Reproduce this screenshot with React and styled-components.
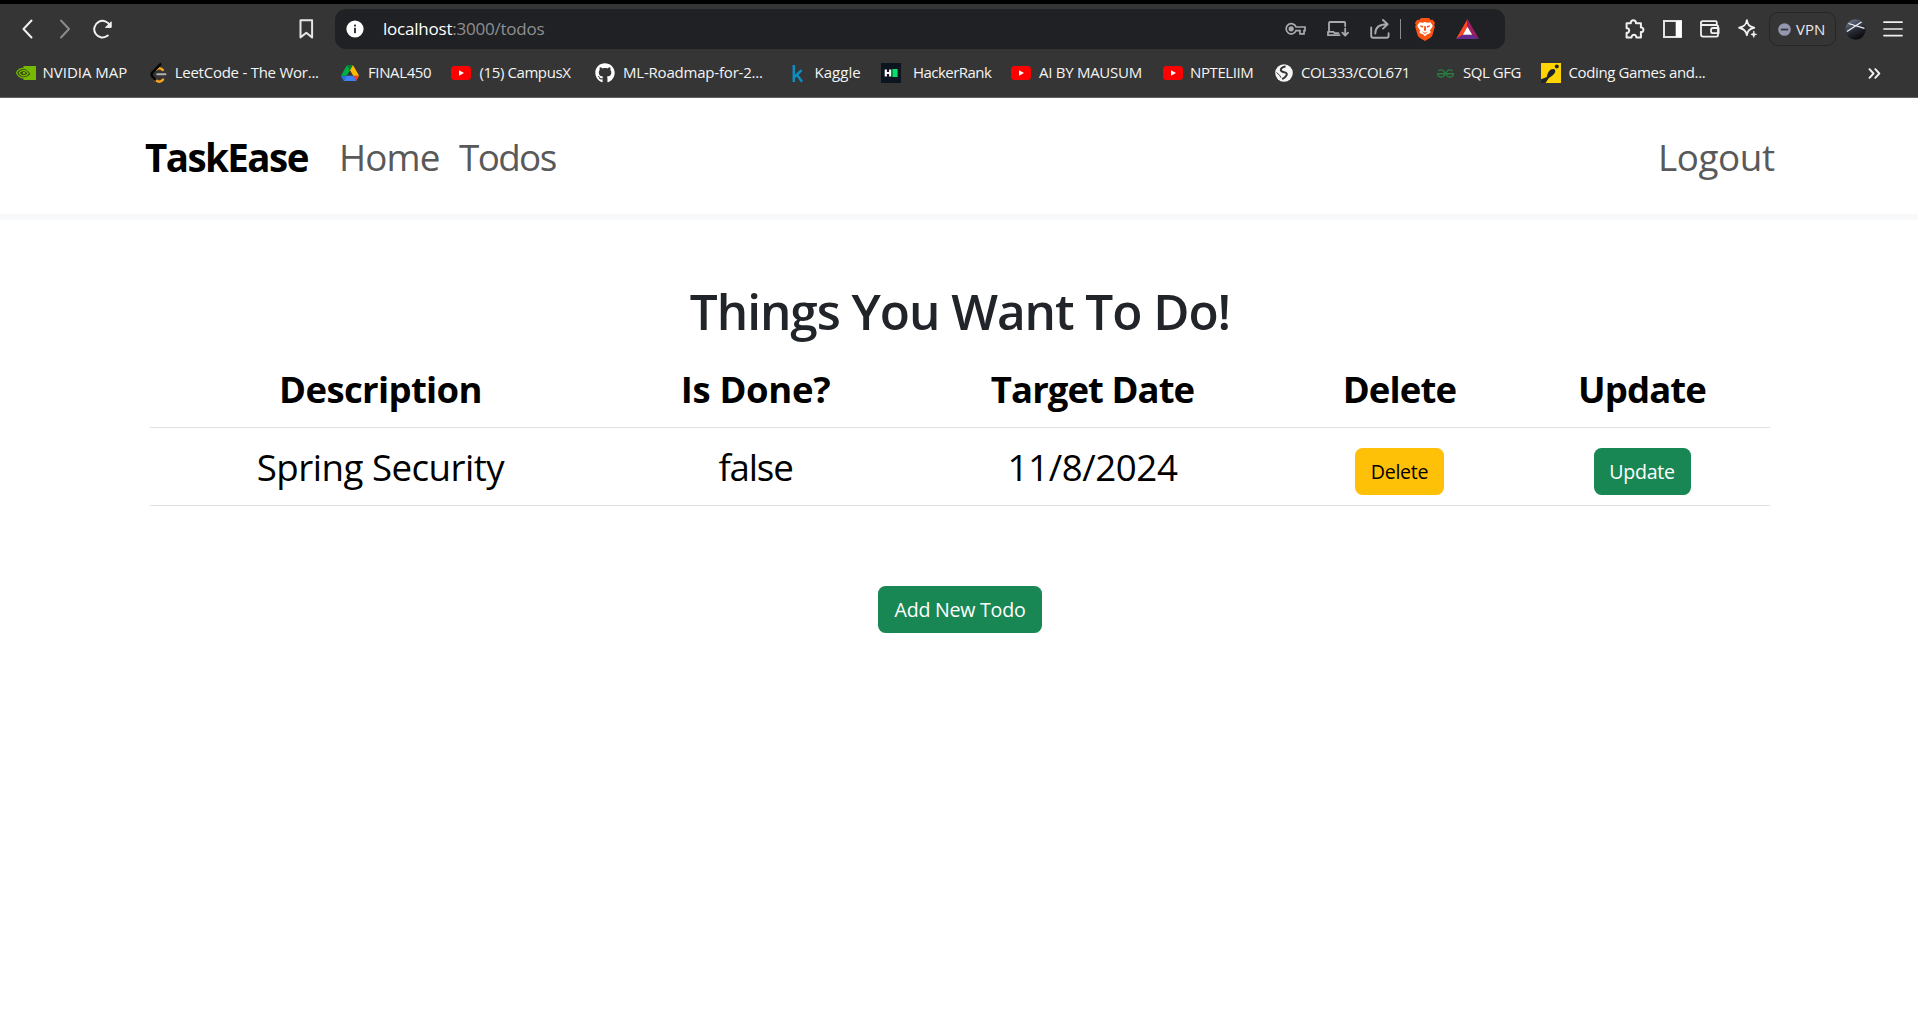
import React from 'react';
import styled, { createGlobalStyle } from 'styled-components';
import { FaGithub } from 'react-icons/fa';
import { SiGeeksforgeeks } from 'react-icons/si';

const GlobalStyle = createGlobalStyle`
  * { box-sizing: border-box; }
  body {
    margin: 0;
    background: #fff;
    font-family: "Open Sans", "Noto Sans", sans-serif;
  }
`;

const Page = styled.div`
  display: flex;
  flex-direction: column;
  height: 1032px;
  overflow: hidden;
`;

/* ---------- browser chrome ---------- */

const Chrome = styled.header`
  display: flex;
  flex-direction: column;
  height: 98px;
  background: #353535;
  border-top: 4px solid #000;
  border-bottom: 1px solid #645f5e;
  color: #fff;
`;

const Toolbar = styled.div`
  display: flex;
  align-items: center;
  height: 50px;
`;

const Slot = styled.span`
  display: flex;
  flex: none;
  align-items: center;
  justify-content: center;
  width: ${p => p.$w}px;
  margin-left: ${p => p.$gap || 0}px;
  svg { display: block; flex: none; }
`;

const AddressBar = styled.div`
  display: flex;
  align-items: center;
  width: 1170px;
  height: 40px;
  margin-left: 21px;
  border-radius: 11px;
  background: #202124;
`;

const Url = styled.div`
  width: 902px;
  margin-left: 19px;
  font-size: 17px;
  line-height: 22px;
  letter-spacing: -0.22px;
  color: #8e8f91;
  white-space: nowrap;
`;

const Host = styled.span`
  color: #fff;
`;

const Divider = styled.span`
  width: 1px;
  height: 20px;
  margin-left: 10px;
  background: #8a8b8d;
`;

const VpnButton = styled.div`
  display: flex;
  align-items: center;
  width: 67px;
  height: 34px;
  margin-left: 11px;
  padding-left: 8px;
  gap: 5px;
  border: 1px solid #262626;
  border-radius: 9px;
  font-size: 15px;
  line-height: 20px;
  color: #e8e8e8;
  svg { flex: none; }
`;

const BookmarkBar = styled.nav`
  display: flex;
  align-items: center;
  height: 38px;
  padding-left: 16px;
`;

const Bookmark = styled.div`
  display: flex;
  flex: none;
  align-items: center;
  width: ${p => p.$w}px;
`;

const BookmarkLabel = styled.span`
  margin-left: ${p => p.$gap}px;
  margin-top: -3px;
  font-size: 15px;
  line-height: 20px;
  letter-spacing: ${p => p.$track}px;
  white-space: nowrap;
  color: #f4f4f4;
`;

/* ---------- page ---------- */

const SiteNav = styled.nav`
  display: flex;
  align-items: center;
  height: 122px;
  padding: 1px 142px 0 145px;
  border-bottom: 6px solid #f8f9fa;
`;

const Brand = styled.span`
  width: 194px;
  font-size: 38.5px;
  font-weight: 700;
  line-height: 56px;
  letter-spacing: -1.55px;
  color: #000;
  white-space: nowrap;
`;

const NavLink = styled.a`
  width: ${p => p.$w}px;
  margin-left: ${p => p.$push ? 'auto' : 0};
  font-size: 36.8px;
  line-height: 56px;
  letter-spacing: ${p => p.$track}px;
  color: #595959;
  white-space: nowrap;
`;

const Main = styled.main`
  display: flex;
  flex-direction: column;
  align-items: center;
  padding: 61px 0 0 2px;
`;

const Title = styled.h1`
  margin: 0 0 8px;
  height: 61px;
  font-size: 49.5px;
  font-weight: 600;
  line-height: 61px;
  letter-spacing: -1.05px;
  color: #212529;
  white-space: nowrap;
`;

const Table = styled.div`
  display: flex;
  flex-direction: column;
  width: 1620px;
`;

const Row = styled.div`
  display: grid;
  grid-template-columns: 461px 289px 385px 229px 256px;
  align-items: center;
  justify-items: center;
  height: 78px;
  border-bottom: 1px solid #dee2e6;
  color: #000;
`;

const Head = styled.span`
  font-size: 36.5px;
  font-weight: 700;
  line-height: 56px;
  letter-spacing: ${p => p.$track}px;
  white-space: nowrap;
`;

const Cell = styled.span`
  font-size: 36.7px;
  line-height: 56px;
  letter-spacing: ${p => p.$track}px;
  white-space: nowrap;
`;

const Button = styled.button`
  display: flex;
  align-items: center;
  justify-content: center;
  width: ${p => p.$w}px;
  height: 47px;
  margin: ${p => p.$top}px 0 0;
  padding: 0;
  border: 0;
  border-radius: 7.5px;
  font-family: inherit;
  font-size: 19.6px;
  line-height: 30px;
  letter-spacing: -0.25px;
  white-space: nowrap;
  background: ${p => p.$warn ? '#ffc107' : '#198754'};
  color: ${p => p.$warn ? '#000' : '#fff'};
`;

/* ---------- icons ---------- */

const Line = ({ w, h, sw = 2, color = '#f0f0f0', children }) => (
  <svg width={w} height={h} viewBox={`0 0 ${w} ${h}`} fill="none" stroke={color}
    strokeWidth={sw} strokeLinecap="round" strokeLinejoin="round">{children}</svg>
);

const Back = () => <Line w={12} h={20}><path d="M9.5 1.5 1.5 10l8 8.5" /></Line>;
const Forward = () => <Line w={12} h={20} color="#8b8b8b"><path d="M2 1.5 10 10l-8 8.5" /></Line>;
const Reload = () => (
  <Line w={20} h={20}>
    <path d="M14.8 16.6A8.3 8.3 0 1 1 17.2 7" />
    <path d="M18.2 3.2V8.4H12.8Z" fill="#f0f0f0" strokeWidth="1" />
  </Line>
);
const BookmarkIcon = () => <Line w={15} h={20} color="#e6e6e6"><path d="M1.5 1.2h11.6v17.2L7.3 13.8l-5.8 4.6Z" /></Line>;
const Info = () => (
  <svg width="18" height="18" viewBox="0 0 18 18">
    <circle cx="9" cy="9" r="8.6" fill="#fff" />
    <rect x="8.1" y="4.6" width="1.8" height="1.9" fill="#202124" />
    <rect x="8.1" y="7.8" width="1.8" height="5.4" fill="#202124" />
  </svg>
);
const Key = () => (
  <Line w={21} h={14} sw={1.7} color="#a9aaac">
    <path d="M11 5h9v3.6h-1v3.2h-4V8.6h-4a5.1 5.1 0 1 1 0-3.6Z" strokeLinejoin="miter" />
    <circle cx="6.2" cy="6.8" r="1.8" fill="#a9aaac" />
  </Line>
);
const Install = () => (
  <Line w={22} h={16} sw={1.8} color="#a9aaac">
    <path d="M18.2 5V2a1 1 0 0 0-1-1H3a1 1 0 0 0-1 1v8.5M1 10.8h5.5l1 1.400h4M1 10.800v3.400h11.500" />
    <path d="M18.200 7.500v6.800M15.400 11.700l2.800 2.900 2.800-2.900" />
  </Line>
);
const Share = () => (
  <Line w={20} h={20} sw={1.9} color="#a9aaac">
    <path d="M1.2 8.5v8.3a2 2 0 0 0 2 2h13.400a2 2 0 0 0 2-2v-2.600" />
    <path d="M5.3 14.5C5.3 8.5 9 5.2 17.3 5.2M13 1l4.600 4.200L13 9.600" />
  </Line>
);
const Brave = () => (
  <svg width="20" height="23" viewBox="0 0 20 23">
    <path d="M6 0h8l1.8 2 1.9-.2L20 4.7l-.8 2.2.6 1.8-2.3 8.4c-.3 1.1-.9 1.7-1.7 2.3L10 23l-5.8-3.6c-.8-.6-1.4-1.2-1.7-2.3L.2 8.7l.6-1.8L0 4.7l2.3-2.9 1.9.2Z" fill="#fb5412" />
    <path d="m4.6 4.2 3 .5 2.4-.6 2.4.6 3-.5 2.3 3.2-.5 1.8-2.4 3.2 1 1.9-1.7 1.5-1.7.2L10 18.2 7.6 16l-1.7-.2-1.7-1.5 1-1.9-2.4-3.2-.5-1.8Z" fill="#fff" />
    <path d="m4.8 7.3 3.4.7-.3 1.7-2.4-.9ZM15.2 7.3l-3.4.7.3 1.7 2.4-.9ZM9.3 8h1.4l.5 4.3-1.2.7-1.2-.7ZM6.8 13.6 10 14.7l3.2-1.1-3.2 2.3Z" fill="#fb5412" />
  </svg>
);
const Bat = () => (
  <svg width="23" height="20" viewBox="0 0 23 20">
    <path d="M11.5 0 0 20l6.8-4.2 4.7-8Z" fill="#ff4724" />
    <path d="M11.5 0 23 20l-6.8-4.2-4.7-8Z" fill="#9e1f63" />
    <path d="M0 20h23l-6.8-4.2H6.8Z" fill="#662d91" />
    <path d="m11.5 7.8 4.7 8H6.8Z" fill="#fff" />
  </svg>
);
const Puzzle = () => (
  <Line w={20} h={20}>
    <path d="M1.6 4.2h4.2c-.5-4 5.6-4 5.1 0h5v4.4c3.4-.5 3.4 4.9 0 4.4v5.4h-4.6c.3-3.4-5-3.4-4.7 0h-5v-4.6c3.4.4 3.4-5 0-4.6Z" />
  </Line>
);
const SidePanel = () => (
  <svg width="19" height="18" viewBox="0 0 19 18">
    <rect x="1" y="1" width="17" height="16" fill="none" stroke="#e2e2e2" strokeWidth="2" />
    <rect x="12.7" y="1" width="5.8" height="16" fill="#fff" />
  </svg>
);
const Wallet = () => (
  <Line w={20} h={18} sw={1.8}>
    <path d="M1 3v11.6a2 2 0 0 0 2 2h13.4a1.6 1.6 0 0 0 1.6-1.6V6.6a1.6 1.6 0 0 0-1.6-1.6H2.8a1.9 1.9 0 0 1 0-3.8h12.6a1.4 1.4 0 0 1 1.4 1.4V5" />
    <path d="M18.6 8H13a2 2 0 0 0-2 2v1.2a2 2 0 0 0 2 2h5.6Z" />
  </Line>
);
const Sparkle = () => (
  <Line w={20} h={20} sw={1.9}>
    <path d="M8.9 1.2c.7 4.3 2 6.3 7.3 7.5-5.3 1.2-6.6 3.4-7.3 7.5-.7-4.1-2.3-6.3-7.7-7.5 5.4-1.2 7-3.2 7.7-7.5Z" />
    <path d="M15.8 12.4c.4 2 .9 2.6 2.9 3-2 .4-2.5 1-2.9 3-.4-2-.9-2.6-2.9-3 2-.4 2.5-1 2.9-3Z" fill="#f0f0f0" strokeWidth=".8" />
  </Line>
);
const VpnDot = () => (
  <svg width="13" height="13" viewBox="0 0 13 13">
    <circle cx="6.5" cy="6.5" r="6.3" fill="#9497ad" />
    <rect x="2.8" y="5.7" width="7.4" height="1.7" fill="#33343c" />
  </svg>
);
const Avatar = () => (
  <svg width="21" height="21" viewBox="0 0 21 21">
    <defs>
      <linearGradient id="avatar" x1=".2" y1="0" x2=".7" y2="1">
        <stop offset="0" stopColor="#6f7890" />
        <stop offset=".55" stopColor="#272a33" />
        <stop offset="1" stopColor="#060608" />
      </linearGradient>
    </defs>
    <circle cx="10.5" cy="10.5" r="10.2" fill="url(#avatar)" />
    <path d="M2 12.5 16.5 3M3.5 4.5l16 4.8" stroke="#f0f0f0" strokeWidth="1.3" />
  </svg>
);
const Menu = () => <Line w={20} h={16} sw={1.7}><path d="M1 1.2h18M1 8h18M1 14.6h18" /></Line>;

const Nvidia = () => (
  <svg width="20" height="14" viewBox="0 0 20 14">
    <path d="M7.5 0H20v14H7.5Z" fill="#76b900" />
    <path d="M7.5 2.4C4 2.4 1.5 4.6.4 6.7c1.7 3.4 4.4 5.2 7.4 5.2 3.7 0 5.8-2 7.3-3.7C13 5 11 2.4 7.5 2.4Z" fill="#35450f" stroke="#76b900" strokeWidth="1.2" />
    <path d="M7.5 4.3c-2.3.2-3.7 1.3-4.3 2.5.9 1.9 2.5 3 4.5 3 2 0 3.6-1.2 4.5-2.3-1.3-2-2.7-3.3-4.7-3.2Z" fill="none" stroke="#76b900" strokeWidth="1.2" />
    <circle cx="8" cy="7" r="1.3" fill="#76b900" />
  </svg>
);
const LeetCode = () => (
  <Line w={17} h={20} sw={2.5}>
    <path d="M6.6 6.2C8.5 4.6 10.6 5 12.8 7" stroke="#f7a41d" />
    <path d="M5.5 16.9c2.5 2.5 5.2 2.3 7.5-.3" stroke="#f7a41d" />
    <path d="M10.3 1.3 2.5 9.3c-1.3 1.3-1.3 2.9 0 4.2l2.7 3" stroke="#050505" />
    <path d="M7.3 11.3h8.2" stroke="#b3b1b0" strokeWidth="2" />
  </Line>
);
const Drive = () => (
  <svg width="18" height="16" viewBox="0 0 87.3 78">
    <path d="m6.6 66.85 3.85 6.65c.8 1.4 1.95 2.5 3.3 3.3l13.75-23.8h-27.5c0 1.55.4 3.1 1.2 4.5z" fill="#2a6fe0" />
    <path d="m43.65 25-13.75-23.8c-1.35.8-2.5 1.9-3.3 3.3l-25.4 44a9.06 9.06 0 0 0-1.2 4.5h27.5z" fill="#00ac47" />
    <path d="m73.55 76.8c1.35-.8 2.5-1.9 3.3-3.3l1.6-2.75 7.65-13.25c.8-1.4 1.2-2.95 1.2-4.5h-27.5l5.85 11.5z" fill="#ea4335" />
    <path d="m43.65 25 13.75-23.8c-1.35-.8-2.9-1.2-4.5-1.2h-18.5c-1.6 0-3.15.45-4.5 1.2z" fill="#00832d" />
    <path d="m59.8 53h-32.3l-13.75 23.8c1.35.8 2.9 1.2 4.5 1.2h50.8c1.6 0 3.15-.45 4.5-1.2z" fill="#3c82f6" />
    <path d="m73.4 26.5-12.7-22c-.8-1.4-1.95-2.5-3.3-3.3l-13.75 23.8 16.15 28h27.45c0-1.55-.4-3.1-1.2-4.5z" fill="#ffba00" />
  </svg>
);
const YouTube = () => (
  <svg width="20" height="14" viewBox="0 0 20 14">
    <rect width="20" height="14" rx="3.5" fill="#f00" />
    <path d="M8 4.2v5.6L13 7Z" fill="#fff" />
  </svg>
);
const Kaggle = () => (
  <Line w={12} h={19} sw={2.5} color="#0f8cc0">
    <path d="M1.8 1v17M9.6 6.2 2.4 13.2M4.9 10.8l5.2 7" strokeLinecap="butt" />
  </Line>
);
const HackerRank = () => (
  <svg width="20" height="20" viewBox="0 0 20 20">
    <rect width="20" height="20" fill="#0c141f" />
    <path d="M3.7 6.5h2.2v2.4h2.2V6.5h2.2v7H8.1v-2.5H5.9v2.5H3.7Z" fill="#fff" />
    <rect x="11.4" y="6" width="5.2" height="8" fill="#05e06a" />
  </svg>
);
const Globe = () => (
  <svg width="18" height="18" viewBox="0 0 18 18">
    <circle cx="9" cy="9" r="8.8" fill="#f5f5f5" />
    <path d="M10.5 2.3C7.5 3.2 5.6 4.5 5.8 6.2c.2 1.5 1.8 1.7 3.5 2 2.5.5 3 1.9 2.1 3.3-.9 1.5-2.2 2.6-4.2 3.6" fill="none" stroke="#353535" strokeWidth="2" />
    <path d="M1.5 8.5l3.2 2.8 1.2 2.4" fill="none" stroke="#353535" strokeWidth="1" />
  </svg>
);
const CodingGames = () => (
  <svg width="20" height="20" viewBox="0 0 20 20">
    <rect width="20" height="20" fill="#ffd400" />
    <path d="M0 20v-3.8l5.8-2.1C6.5 9.3 9 6 12 6c2.2 0 3 1.8 1.7 4-1.4 2.4-3.5 3.5-6 5.3L4.5 20Z" fill="#20252d" />
    <circle cx="15.8" cy="3.6" r="2" fill="#20252d" />
  </svg>
);
const Overflow = () => <Line w={13} h={11} sw={1.9}><path d="m1.5 1.2 4 4.3-4 4.3M7.3 1.2l4 4.3-4 4.3" /></Line>;

const bookmarks = [
  { icon: <Nvidia />, iw: 20, gap: 6.6, label: 'NVIDIA MAP', track: -0.02, w: 134 },
  { icon: <LeetCode />, iw: 17, gap: 7.7, label: 'LeetCode - The Wor...', track: -0.25, w: 191 },
  { icon: <Drive />, iw: 18, gap: 9, label: 'FINAL450', track: -0.38, w: 110 },
  { icon: <YouTube />, iw: 20, gap: 8.5, label: '(15) CampusX', track: -0.4, w: 144 },
  { icon: <FaGithub size={20} color="#fff" />, iw: 20, gap: 8, label: 'ML-Roadmap-for-2...', track: -0.2, w: 197 },
  { icon: <Kaggle />, iw: 12, gap: 10.5, label: 'Kaggle', track: 0.05, w: 89 },
  { icon: <HackerRank />, iw: 20, gap: 12, label: 'HackerRank', track: -0.53, w: 130 },
  { icon: <YouTube />, iw: 20, gap: 8, label: 'AI BY MAUSUM', track: -0.27, w: 152 },
  { icon: <YouTube />, iw: 20, gap: 7, label: 'NPTELIIM', track: -0.4, w: 112 },
  { icon: <Globe />, iw: 18, gap: 8, label: 'COL333/COL671', track: -0.45, w: 161 },
  { icon: <SiGeeksforgeeks size={17} color="#2b7a40" />, iw: 18, gap: 9, label: 'SQL GFG', track: -0.45, w: 105 },
  { icon: <CodingGames />, iw: 20, gap: 7.5, label: 'Coding Games and...', track: -0.37, w: 327 },
];

const todos = [{ description: 'Spring Security', done: false, date: '11/8/2024' }];

export default function App() {
  return (
    <Page>
      <GlobalStyle />
      <Chrome>
        <Toolbar>
          <Slot $w={12} $gap={22}><Back /></Slot>
          <Slot $w={12} $gap={25}><Forward /></Slot>
          <Slot $w={20} $gap={22}><Reload /></Slot>
          <Slot $w={15} $gap={186}><BookmarkIcon /></Slot>
          <AddressBar>
            <Slot $w={18} $gap={11}><Info /></Slot>
            <Url><Host>localhost</Host>:3000/todos</Url>
            <Slot $w={21}><Key /></Slot>
            <Slot $w={22} $gap={21}><Install /></Slot>
            <Slot $w={20} $gap={21}><Share /></Slot>
            <Divider />
            <Slot $w={20} $gap={14}><Brave /></Slot>
            <Slot $w={23} $gap={21}><Bat /></Slot>
          </AddressBar>
          <Slot $w={20} $gap={120}><Puzzle /></Slot>
          <Slot $w={19} $gap={18}><SidePanel /></Slot>
          <Slot $w={20} $gap={18}><Wallet /></Slot>
          <Slot $w={20} $gap={18}><Sparkle /></Slot>
          <VpnButton><VpnDot />VPN</VpnButton>
          <Slot $w={21} $gap={9}><Avatar /></Slot>
          <Slot $w={20} $gap={17}><Menu /></Slot>
        </Toolbar>
        <BookmarkBar>
          {bookmarks.map(b => (
            <Bookmark key={b.label} $w={b.w}>
              <Slot $w={b.iw}>{b.icon}</Slot>
              <BookmarkLabel $gap={b.gap} $track={b.track}>{b.label}</BookmarkLabel>
            </Bookmark>
          ))}
          <Slot $w={13}><Overflow /></Slot>
        </BookmarkBar>
      </Chrome>

      <SiteNav>
        <Brand>TaskEase</Brand>
        <NavLink $w={120} $track={-0.9}>Home</NavLink>
        <NavLink $w={110} $track={-1.6}>Todos</NavLink>
        <NavLink $w={118} $track={-0.4} $push>Logout</NavLink>
      </SiteNav>

      <Main>
        <Title>Things You Want To Do!</Title>
        <Table>
          <Row>
            <Head $track={-0.64}>Description</Head>
            <Head $track={-0.35}>Is Done?</Head>
            <Head $track={-0.95}>Target Date</Head>
            <Head $track={-0.85}>Delete</Head>
            <Head $track={-0.85}>Update</Head>
          </Row>
          {todos.map(t => (
            <Row key={t.description}>
              <Cell $track={-0.52}>{t.description}</Cell>
              <Cell $track={-1.2}>{String(t.done)}</Cell>
              <Cell $track={-0.42}>{t.date}</Cell>
              <Button $w={89} $top={10} $warn>Delete</Button>
              <Button $w={97} $top={10}>Update</Button>
            </Row>
          ))}
        </Table>
        <Button $w={164} $top={80}>Add New Todo</Button>
      </Main>
    </Page>
  );
}
